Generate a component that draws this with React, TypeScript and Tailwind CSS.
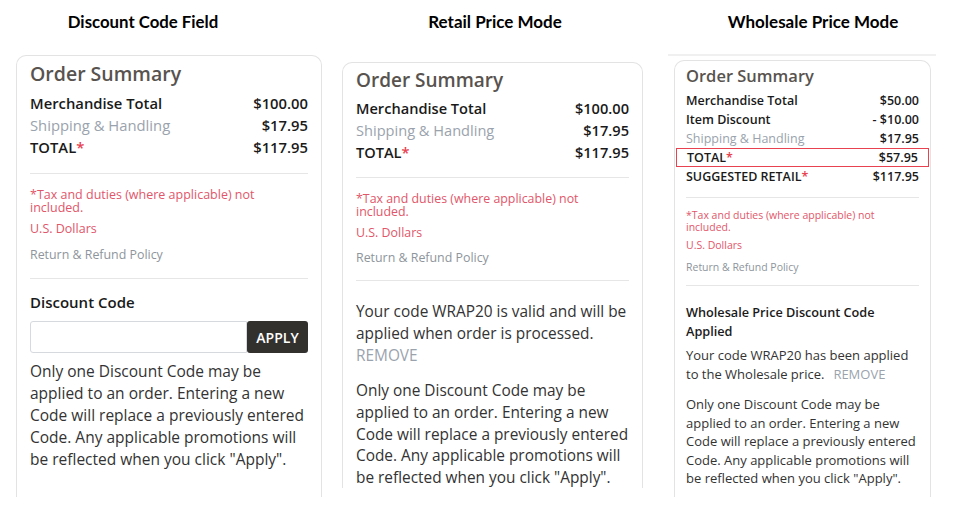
import React from "react";

const Row = ({ label, value, labelClass = "", valueClass = "", star = false }: { label: string; value: string; labelClass?: string; valueClass?: string; star?: boolean }) => (
  <div className="flex justify-between">
    <span className={labelClass}>
      {label}
      {star && <span className="text-[#e8414f]">*</span>}
    </span>
    <span className={valueClass}>{value}</span>
  </div>
);

const para = ["Only one Discount Code may be", "applied to an order. Entering a new", "Code will replace a previously entered", "Code. Any applicable promotions will", 'be reflected when you click "Apply".'];

export default function App() {
  return (
    <div className="w-[966px] h-[520px] bg-white flex font-['Open_Sans',sans-serif] text-[#222]">
      {/* Column 1 */}
      <div className="w-[330px] shrink-0">
        <div className="w-[286px] text-center pt-[11px] h-[55px] text-[16.8px] leading-[22px] font-bold font-['Lato',sans-serif] text-black">Discount Code Field</div>
        <div className="ml-[16px] w-[306px] h-[442px] border border-b-0 border-[#e3e3e3] rounded-t-[10px] px-[13px] pt-[7px]">
          <div className="text-[19.5px] leading-[22px] font-semibold text-[#58534e]">Order Summary</div>
          <div className="mt-[7px] text-[14.8px] leading-[22px] font-semibold text-[#1a1a1a]">
            <Row label="Merchandise Total" value="$100.00" />
            <Row label="Shipping & Handling" value="$17.95" labelClass="font-normal text-[#9aa3ad]" />
            <Row label="TOTAL" value="$117.95" star />
          </div>
          <div className="mt-[15px] h-px bg-[#e6e6e6]" />
          <div className="mt-[14px] text-[12.5px] leading-[13px] text-[#e2566a]">*Tax and duties (where applicable) not included.</div>
          <div className="mt-[8px] text-[12.5px] leading-[13px] text-[#e2566a]">U.S. Dollars</div>
          <div className="mt-[13px] text-[12.4px] leading-[13px] text-[#8e959c]">Return &amp; Refund Policy</div>
          <div className="mt-[17px] h-px bg-[#e6e6e6]" />
          <div className="mt-[13px] text-[15px] leading-[20px] font-semibold text-[#1a1a1a]">Discount Code</div>
          <div className="mt-[9px] flex h-[32px]">
            <div className="flex-1 border border-[#d6d9dd] rounded-l-[3px]" />
            <div className="w-[61px] bg-[#33312e] rounded-[3px] text-white text-[14px] font-semibold flex items-center justify-center">APPLY</div>
          </div>
          <div className="mt-[7px] text-[15.5px] leading-[22px] text-[#333]">
            {para.map((l) => (
              <div key={l}>{l}</div>
            ))}
          </div>
        </div>
      </div>

      {/* Column 2 */}
      <div className="w-[330px] shrink-0">
        <div className="w-[330px] text-center pt-[11px] h-[62px] text-[17px] leading-[22px] font-bold font-['Lato',sans-serif] text-black">Retail Price Mode</div>
        <div className="ml-[12px] w-[301px] h-[426px] border border-b-0 border-[#e3e3e3] rounded-t-[10px] px-[13px] pt-[6px]">
          <div className="text-[19px] leading-[22px] font-semibold text-[#58534e]">Order Summary</div>
          <div className="mt-[6px] text-[14.6px] leading-[22px] font-semibold text-[#1a1a1a]">
            <Row label="Merchandise Total" value="$100.00" />
            <Row label="Shipping & Handling" value="$17.95" labelClass="font-normal text-[#9aa3ad]" />
            <Row label="TOTAL" value="$117.95" star />
          </div>
          <div className="mt-[14px] h-px bg-[#e6e6e6]" />
          <div className="mt-[13.5px] text-[12.4px] leading-[13px] text-[#e2566a]">*Tax and duties (where applicable) not included.</div>
          <div className="mt-[8px] text-[12.4px] leading-[13px] text-[#e2566a]">U.S. Dollars</div>
          <div className="mt-[12px] text-[12.4px] leading-[13px] text-[#8e959c]">Return &amp; Refund Policy</div>
          <div className="mt-[16.5px] h-px bg-[#e6e6e6]" />
          <div className="mt-[20px] text-[15.4px] leading-[22px] text-[#333]">
            <div>Your code WRAP20 is valid and will be</div>
            <div>applied when order is processed.</div>
            <div className="text-[#9aa3ad]">REMOVE</div>
          </div>
          <div className="mt-[13px] text-[15.4px] leading-[21.8px] text-[#333]">
            {para.map((l) => (
              <div key={l}>{l}</div>
            ))}
          </div>
        </div>
      </div>

      {/* Column 3 */}
      <div className="w-[306px] shrink-0">
        <div className="w-[306px] text-center pt-[11px] h-[54px] text-[17px] leading-[22px] font-bold font-['Lato',sans-serif] text-black">Wholesale Price Mode</div>
        <div className="ml-[8px] w-[268px] h-[2px] bg-[#f0f0f0]" />
        <div className="mt-[4px] ml-[14px] w-[257px] h-[437px] border border-b-0 border-[#e3e3e3] rounded-t-[10px] px-[11px] pt-[5px]">
          <div className="text-[16.5px] leading-[20px] font-semibold text-[#58534e]">Order Summary</div>
          <div className="mt-[5px] text-[12.5px] leading-[19px] font-semibold text-[#1a1a1a]">
            <Row label="Merchandise Total" value="$50.00" />
            <Row label="Item Discount" value="- $10.00" />
            <Row label="Shipping & Handling" value="$17.95" labelClass="font-normal text-[#9aa3ad]" />
            <div className="-mx-[10px] px-[10px] border border-[#e8414f] leading-[17px]">
              <Row label="TOTAL" value="$57.95" star />
            </div>
            <Row label="SUGGESTED RETAIL" value="$117.95" star />
          </div>
          <div className="mt-[11px] h-px bg-[#e6e6e6]" />
          <div className="mt-[11px] text-[10.5px] leading-[12px] text-[#e2566a]">*Tax and duties (where applicable) not included.</div>
          <div className="mt-[6px] text-[10.5px] leading-[12px] text-[#e2566a]">U.S. Dollars</div>
          <div className="mt-[10px] text-[10.5px] leading-[12px] text-[#8e959c]">Return &amp; Refund Policy</div>
          <div className="mt-[12px] h-px bg-[#e6e6e6]" />
          <div className="mt-[17px] text-[12.7px] leading-[19px] font-semibold text-[#1a1a1a]">
            <div>Wholesale Price Discount Code</div>
            <div>Applied</div>
          </div>
          <div className="mt-[5px] text-[13px] leading-[18.5px] text-[#333]">
            <div>Your code WRAP20 has been applied</div>
            <div>
              to the Wholesale price.<span className="ml-[9px] text-[#9aa3ad]">REMOVE</span>
            </div>
          </div>
          <div className="mt-[12px] text-[13px] leading-[18.5px] text-[#333]">
            {para.map((l) => (
              <div key={l}>{l}</div>
            ))}
          </div>
        </div>
      </div>
    </div>
  );
}
